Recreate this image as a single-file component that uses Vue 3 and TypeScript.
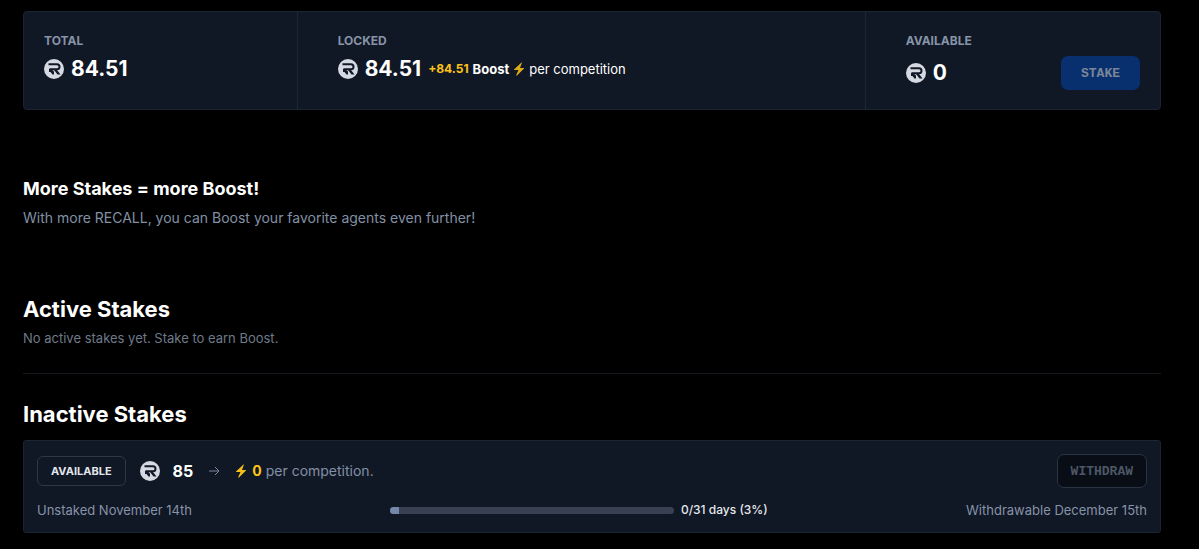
<script setup lang="ts">
import { defineComponent, h } from 'vue'

interface InactiveStake {
  amount: number
  boost: number
  unstaked: string
  withdrawable: string
  daysPassed: number
  daysTotal: number
  percent: number
}

const balances = { total: '84.51', locked: '84.51', available: '0' }

const inactiveStakes: InactiveStake[] = [
  {
    amount: 85,
    boost: 0,
    unstaked: 'November 14th',
    withdrawable: 'December 15th',
    daysPassed: 0,
    daysTotal: 31,
    percent: 3,
  },
]

const TokenIcon = defineComponent({
  render: () =>
    h('svg', { viewBox: '0 0 40 40', width: 20, height: 20, 'aria-hidden': 'true' }, [
      h('circle', { cx: 20, cy: 20, r: 20, fill: '#d5d9e1' }),
      h('path', {
        d: 'M9 10.5H26C29.5 10.5 31 12.5 31 15.5C31 18.5 29.5 20.5 26 20.5H11',
        fill: 'none',
        stroke: '#111827',
        'stroke-width': 4,
      }),
      h('path', {
        d: 'M10 20H14L20 25V31H17L13 26H10Z M20 22H26L33 31H27Z',
        fill: '#111827',
      }),
    ]),
})

const BoltIcon = defineComponent({
  render: () =>
    h('svg', { viewBox: '0 0 24 28', width: 12, height: 14, 'aria-hidden': 'true' }, [
      h('path', {
        d: 'M17 1L2 15L2 16H11L6 27H8L22 13L22 12H14L18 1Z',
        fill: '#f4bd18',
      }),
    ]),
})
</script>

<template>
  <main class="page">
    <section class="summary">
      <div class="cell first">
        <h2 class="label">TOTAL</h2>
        <div class="amount"><TokenIcon /><span>{{ balances.total }}</span></div>
      </div>
      <div class="cell">
        <h2 class="label">LOCKED</h2>
        <div class="amount">
          <TokenIcon /><span>{{ balances.locked }}</span>
          <p class="reward">
            <b class="gold">+{{ balances.locked }}</b>
            <b>Boost</b>
            <BoltIcon class="dim" />
            <span>per competition</span>
          </p>
        </div>
      </div>
      <div class="cell last">
        <h2 class="label">AVAILABLE</h2>
        <div class="action-row">
          <div class="amount"><TokenIcon /><span>{{ balances.available }}</span></div>
          <button class="button stake" type="button" disabled>STAKE</button>
        </div>
      </div>
    </section>

    <section class="promo">
      <h2>More Stakes = more Boost!</h2>
      <p>With more RECALL, you can Boost your favorite agents even further!</p>
    </section>

    <section class="active">
      <h2 class="heading">Active Stakes</h2>
      <p>No active stakes yet. Stake to earn Boost.</p>
    </section>

    <section class="inactive">
      <h2 class="heading">Inactive Stakes</h2>
      <article v-for="stake in inactiveStakes" :key="stake.unstaked" class="stake-card">
        <div class="stake-top">
          <span class="badge">AVAILABLE</span>
          <TokenIcon class="stake-token" />
          <b class="stake-amount">{{ stake.amount }}</b>
          <svg class="arrow" viewBox="0 0 12 12" width="12" height="12" aria-hidden="true">
            <path d="M1 6H11M7 2L11 6L7 10" fill="none" stroke="#7d899b" stroke-width="1" />
          </svg>
          <BoltIcon />
          <b class="gold stake-boost">{{ stake.boost }}</b>
          <span class="per">per competition.</span>
          <button class="button withdraw" type="button" disabled>WITHDRAW</button>
        </div>
        <div class="stake-bottom">
          <span>Unstaked {{ stake.unstaked }}</span>
          <div class="progress">
            <div
              class="track"
              role="progressbar"
              aria-label="Days until withdrawable"
              :aria-valuenow="stake.percent"
              aria-valuemin="0"
              aria-valuemax="100"
            >
              <div class="fill" :style="{ width: stake.percent + '%' }"></div>
            </div>
            <span class="days">{{ stake.daysPassed }}/{{ stake.daysTotal }} days ({{ stake.percent }}%)</span>
          </div>
          <span>Withdrawable {{ stake.withdrawable }}</span>
        </div>
      </article>
    </section>
  </main>
</template>

<style>
body {
  margin: 0;
  background: #000;
}
</style>

<style scoped>
.page {
  padding: 11px 38px 16px 23px;
  color: #fff;
  font-family: Inter, 'Liberation Sans', sans-serif;
  font-size: 13px;
  line-height: 20px;
}
h2,
p {
  margin: 0;
}
svg {
  display: block;
  flex: none;
}
.summary {
  display: grid;
  grid-template-columns: 12fr 25fr 13fr;
  border: 1px solid #1b2431;
  border-radius: 4px;
  background: #101725;
}
.cell {
  padding: 19px 20px 19px 40px;
  border-left: 1px solid #1d2633;
}
.cell.first {
  padding-left: 20px;
  border-left: 0;
}
.label {
  color: #8793a7;
  font-size: 12px;
  font-weight: 700;
  line-height: 20px;
}
.amount {
  display: flex;
  align-items: center;
  gap: 7px;
  margin-top: 4px;
  font-size: 21px;
  font-weight: 700;
  line-height: 28px;
}
.reward {
  display: flex;
  align-items: center;
  gap: 4px;
  font-size: 13px;
  font-weight: 400;
  line-height: 20px;
}
.gold {
  color: #fcc419;
}
.reward .gold {
  font-size: 12px;
}
.dim {
  opacity: 0.9;
}
.action-row {
  display: flex;
  align-items: center;
  justify-content: space-between;
  margin-top: 5px;
}
.action-row .amount {
  margin-top: 0;
}
.button {
  box-sizing: border-box;
  height: 34px;
  padding: 0 13px;
  border: 1px solid transparent;
  border-radius: 7px;
  font-family: 'Liberation Mono', monospace;
  font-size: 13px;
  font-weight: 700;
}
.stake {
  padding: 0 19px;
  background: #08306f;
  color: #7c8797;
}
.withdraw {
  margin-left: auto;
  border-color: #2b3442;
  background: #090d15;
  color: #4d5766;
}
.promo {
  padding-top: 66px;
}
.promo h2 {
  font-size: 18px;
  font-weight: 700;
  line-height: 26px;
}
.promo p {
  margin-top: 4px;
  color: #8290a5;
  font-size: 14px;
  line-height: 24px;
}
.active {
  padding: 65px 0 25px;
  border-bottom: 1px solid #13181f;
}
.heading {
  font-size: 22px;
  font-weight: 700;
  line-height: 28px;
}
.active p {
  margin-top: 5px;
  color: #6f7a89;
  font-size: 13px;
}
.inactive {
  padding-top: 26px;
}
.stake-card {
  margin-top: 12px;
  padding: 13px 13px 12px;
  border: 1px solid #1b2431;
  border-radius: 3px;
  background: #101725;
}
.stake-top {
  display: flex;
  align-items: center;
}
.badge {
  padding: 4px 13px;
  border: 1px solid #2e3846;
  border-radius: 6px;
  color: #e2e6ec;
  font-size: 11px;
  font-weight: 700;
  line-height: 20px;
}
.stake-token {
  margin-left: 14px;
}
.stake-amount {
  margin-left: 13px;
  font-size: 16px;
}
.arrow {
  margin: 0 15px;
}
.stake-boost {
  margin-left: 5px;
  font-size: 14px;
}
.per {
  margin-left: 4px;
  color: #8290a5;
  font-size: 14px;
}
.stake-bottom {
  display: flex;
  align-items: center;
  justify-content: space-between;
  margin-top: 12px;
  color: #8793a7;
}
.progress {
  display: flex;
  align-items: center;
  gap: 7px;
  width: 34%;
}
.track {
  flex: 1;
  height: 7px;
  overflow: hidden;
  border-radius: 4px;
  background: #374151;
}
.fill {
  height: 100%;
  background: #7488ab;
}
.days {
  color: #e5e7eb;
  font-size: 12px;
  font-weight: 500;
}
</style>
